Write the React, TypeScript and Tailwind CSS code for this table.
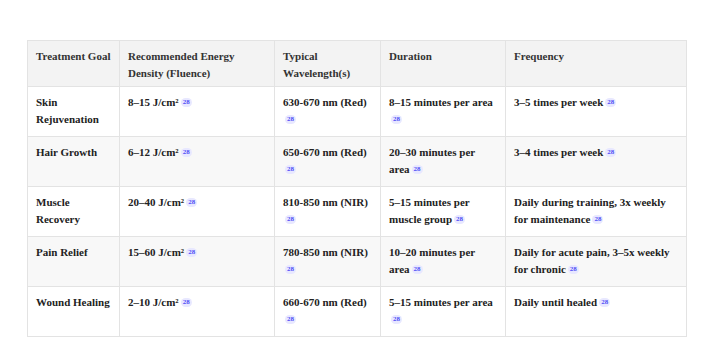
import React from "react";

const rows = [
  {
    goal: "Skin Rejuvenation",
    fluence: "8–15 J/cm²",
    wave: "630-670 nm (Red)",
    duration: "8–15 minutes per area",
    freq: "3–5 times per week",
  },
  {
    goal: "Hair Growth",
    fluence: "6–12 J/cm²",
    wave: "650-670 nm (Red)",
    duration: "20–30 minutes per area",
    freq: "3–4 times per week",
  },
  {
    goal: "Muscle Recovery",
    fluence: "20–40 J/cm²",
    wave: "810-850 nm (NIR)",
    duration: "5–15 minutes per muscle group",
    freq: "Daily during training, 3x weekly for maintenance",
  },
  {
    goal: "Pain Relief",
    fluence: "15–60 J/cm²",
    wave: "780-850 nm (NIR)",
    duration: "10–20 minutes per area",
    freq: "Daily for acute pain, 3–5x weekly for chronic",
  },
  {
    goal: "Wound Healing",
    fluence: "2–10 J/cm²",
    wave: "660-670 nm (Red)",
    duration: "5–15 minutes per area",
    freq: "Daily until healed",
  },
];

// citation pill
const Ref = () => (
  <span className="relative -top-[2px] ml-[2px] inline-block rounded-full bg-[#e8e8ff] px-[2px] text-[7px] leading-[9px] font-bold text-[#4f4ff5]">
    28
  </span>
);

const cell = "border border-[#e3e3e3] px-2 align-top";

export default function App() {
  return (
    <div
      className="min-h-[355px] w-[704px] bg-white pt-[40px] pl-[27px]"
      style={{ fontFamily: '"Liberation Serif", serif' }}
    >
      <table className="w-[659px] table-fixed border-collapse text-[11px] leading-[17px] font-bold text-[#222]">
        <colgroup>
          <col className="w-[92px]" />
          <col className="w-[155px]" />
          <col className="w-[106px]" />
          <col className="w-[125px]" />
          <col className="w-[181px]" />
        </colgroup>
        <thead>
          <tr className="bg-[#f3f3f3] text-left text-[#333]">
            <th className={`${cell} pt-[7px] pb-[4px]`}>Treatment Goal</th>
            <th className={`${cell} pt-[7px] pb-[4px]`}>Recommended Energy Density (Fluence)</th>
            <th className={`${cell} pt-[7px] pb-[4px]`}>Typical Wavelength(s)</th>
            <th className={`${cell} pt-[7px] pb-[4px]`}>Duration</th>
            <th className={`${cell} pt-[7px] pb-[4px]`}>Frequency</th>
          </tr>
        </thead>
        <tbody>
          {rows.map((r, i) => (
            <tr key={r.goal} className={i % 2 === 1 ? "bg-[#f8f8f8]" : "bg-white"}>
              <td className={`${cell} pt-[7px] pb-[8px]`}>{r.goal}</td>
              <td className={`${cell} pt-[7px] pb-[8px]`}>
                {r.fluence}
                <Ref />
              </td>
              <td className={`${cell} pt-[7px] pb-[8px]`}>
                {r.wave}
                <Ref />
              </td>
              <td className={`${cell} pt-[7px] pb-[8px]`}>
                {r.duration}
                <Ref />
              </td>
              <td className={`${cell} pt-[7px] pb-[8px]`}>
                {r.freq}
                <Ref />
              </td>
            </tr>
          ))}
        </tbody>
      </table>
    </div>
  );
}
